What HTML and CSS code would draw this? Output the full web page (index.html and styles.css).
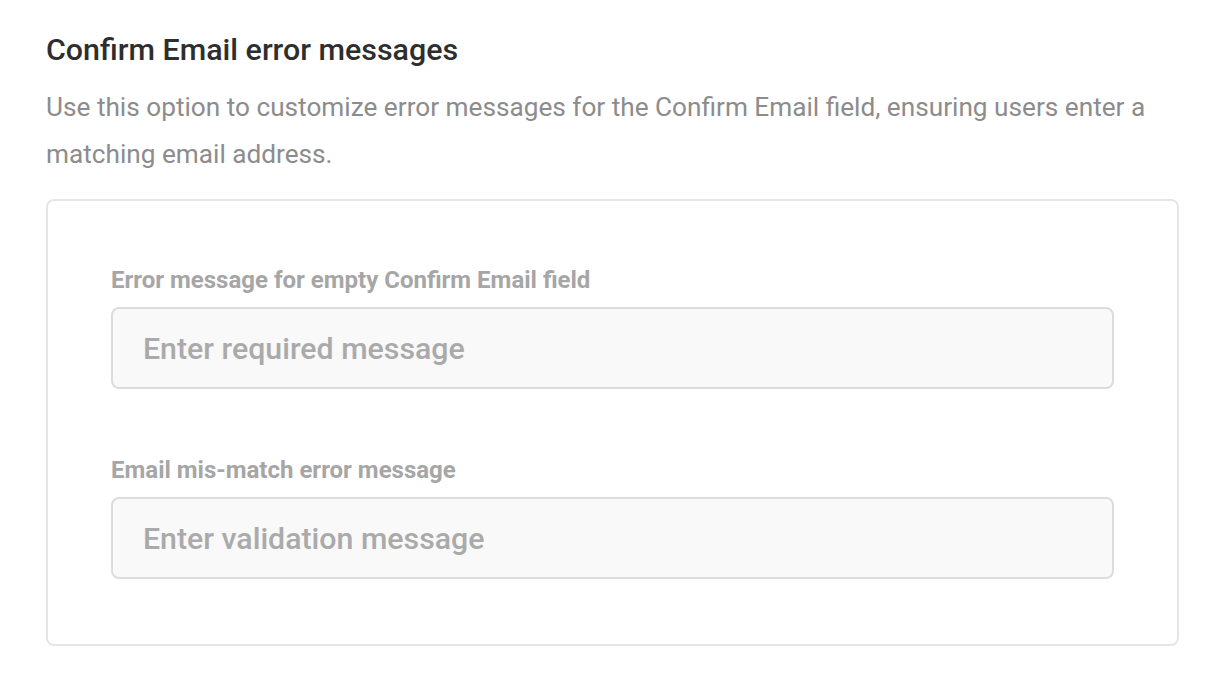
FILE: index.html
```html
<!DOCTYPE html>
<html lang="en">
<head>
  <meta charset="UTF-8">
  <meta name="viewport" content="width=device-width, initial-scale=1.0">
  <title>Confirm Email error messages</title>
  <link rel="stylesheet" href="styles.css">
</head>
<body>
  <div class="section">
    <h2 class="section-title">Confirm Email error messages</h2>
    <p class="section-desc">Use this option to customize error messages for the Confirm Email field, ensuring users enter a matching email address.</p>

    <div class="card">
      <div class="field">
        <label for="emptyMsg">Error message for empty Confirm Email field</label>
        <input type="text" id="emptyMsg" placeholder="Enter required message">
      </div>
      <div class="field">
        <label for="mismatchMsg">Email mis-match error message</label>
        <input type="text" id="mismatchMsg" placeholder="Enter validation message">
      </div>
    </div>
  </div>
</body>
</html>
```

FILE: styles.css
```css
body {
  font-family: Roboto, "Noto Sans", Arial, sans-serif;
  margin: 0;
  padding: 0;
  background: #fff;
}
.section {
  padding: 33px 41px 0 46px;
}
.section-title {
  font-size: 30.4px;
  font-weight: 500;
  color: #2e2e2e;
  margin: 0;
  line-height: 34px;
}
.section-desc {
  font-size: 26.2px;
  color: #8c8c8c;
  line-height: 47px;
  margin: 17px 0 21px;
}
.card {
  border: 2px solid #e6e6e6;
  border-radius: 8px;
  padding: 64px 63px 65px;
  display: flex;
  flex-direction: column;
  gap: 66px;
}
.field {
  display: flex;
  flex-direction: column;
}
.field label {
  font-size: 24px;
  font-weight: 700;
  color: #a6a6a6;
  line-height: 30px;
  margin-bottom: 12px;
}
.field input {
  height: 82px;
  box-sizing: border-box;
  border: 2px solid #dcdcdc;
  border-radius: 8px;
  background: #f9f9f9;
  padding: 0 30px;
  font-family: inherit;
  font-size: 30.3px;
  font-weight: 500;
  color: #333;
  outline: none;
}
.field input::placeholder {
  color: #aaaaaa;
}
```
